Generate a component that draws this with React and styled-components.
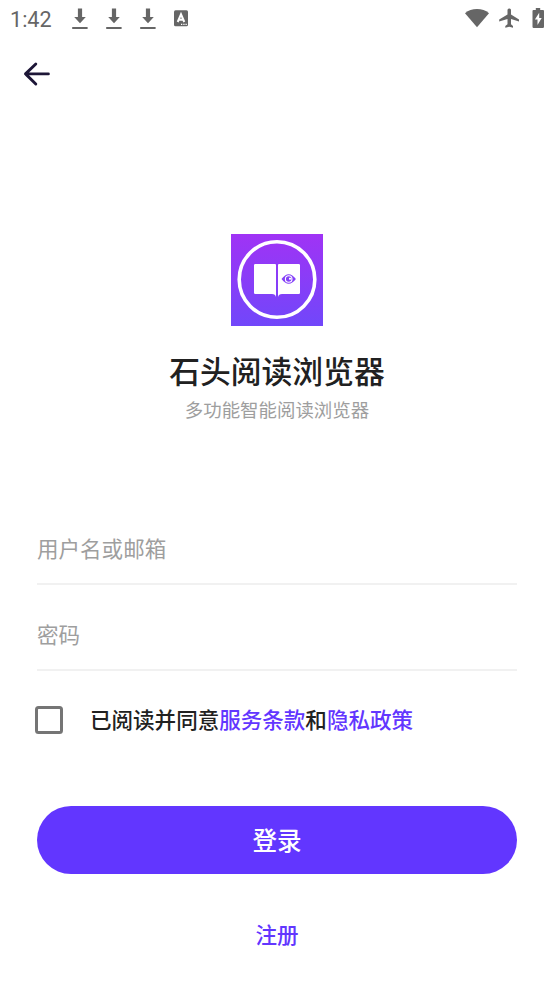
import React from "react";
import styled, { createGlobalStyle } from "styled-components";

const Global = createGlobalStyle`
  * { box-sizing: border-box; }
  html, body { margin: 0; background: #fff; }
  body { font-family: Roboto, "Noto Sans CJK SC", sans-serif; color: #212121; }
  button, input { font: inherit; border: 0; background: none; padding: 0; margin: 0; }
`;

const Screen = styled.main`
  width: 554px;
  height: 984px;
  overflow: hidden;
  background: #fff;
  display: flex;
  flex-direction: column;
`;

const StatusBar = styled.header`
  height: 37px;
  flex: none;
  padding: 0 10px 0 10px;
  display: flex;
  align-items: center;
  justify-content: space-between;
  color: #666;
`;

const StatusGroup = styled.div`
  display: flex;
  align-items: center;
  height: 37px;
`;

const Clock = styled.time`
  width: 62px;
  padding-top: 2px;
  font-size: 21.6px;
  line-height: 26px;
`;

const Glyph = styled.svg`
  display: block;
  flex: none;
  width: ${(p) => p.$w}px;
  height: 37px;
  margin-right: ${(p) => p.$gap || 0}px;
  fill: currentColor;
`;

const NavBar = styled.nav`
  height: 74px;
  flex: none;
  padding-left: 20px;
  display: flex;
  align-items: center;
`;

const BackButton = styled.button`
  width: 34px;
  height: 34px;
  display: block;
  svg { display: block; }
`;

const Brand = styled.section`
  height: 409px;
  flex: none;
  padding-top: 123px;
  display: flex;
  flex-direction: column;
  align-items: center;
`;

const Logo = styled.svg`
  display: block;
  width: 92px;
  height: 92px;
`;

const Title = styled.h1`
  margin: 24px 0 0;
  font-size: 30.77px;
  line-height: 45px;
  font-weight: 500;
  color: #212121;
`;

const Subtitle = styled.p`
  margin: 3px 0 0;
  font-size: 18.46px;
  line-height: 27px;
  font-weight: 400;
  color: #9e9e9e;
`;

const Form = styled.form`
  padding: 0 37px;
  display: flex;
  flex-direction: column;
`;

const Field = styled.input`
  width: 100%;
  height: 65px;
  margin-top: ${(p) => p.$gap || 0}px;
  padding: 0 0 4px;
  border-bottom: 2px solid #f1f1f1;
  border-radius: 0;
  outline: none;
  font-size: 21.54px;
  &::placeholder { color: #9e9e9e; opacity: 1; }
`;

const Agreement = styled.label`
  height: 28px;
  margin: 35px 0 0 -2px;
  display: flex;
  align-items: center;
  font-size: 21.54px;
  line-height: 28px;
  font-weight: 500;
  white-space: nowrap;
`;

const AgreementText = styled.span`
  padding-top: 2px;
`;

const Checkbox = styled.input.attrs({ type: "checkbox" })`
  appearance: none;
  width: 28px;
  height: 28px;
  margin-right: 27px;
  border: 3px solid #757575;
  border-radius: 3.5px;
`;

const Link = styled.span`
  color: #6236ff;
`;

const LoginButton = styled.button`
  height: 68px;
  margin-top: 72px;
  padding-bottom: 3px;
  border-radius: 34px;
  background: #6236ff;
  color: #fff;
  font-size: 24.6px;
  font-weight: 500;
`;

const RegisterButton = styled.button`
  align-self: center;
  margin-top: 46px;
  height: 32px;
  color: #6236ff;
  font-size: 21.54px;
  line-height: 32px;
  font-weight: 500;
`;

const Download = ({ gap }) => (
  <Glyph $w={16} $gap={gap} viewBox="0 0 16 37">
    <path d="M5.900 8.600h4.200v8.300h3.700L8 23.300 2.200 16.900h3.700zM.2 26.900h15.400v2H.2z" />
  </Glyph>
);

const BookLogo = () => (
  <Logo viewBox="0 0 92 92">
    <defs>
      <linearGradient id="brand" x1="0" y1="0" x2="0" y2="1">
        <stop offset="0" stopColor="#a033f5" />
        <stop offset="1" stopColor="#7147fa" />
      </linearGradient>
    </defs>
    <rect width="92" height="92" fill="url(#brand)" />
    <circle cx="46" cy="45.5" r="37.8" fill="none" stroke="#fff" strokeWidth="3.6" />
    <path fill="#fff" d="M24.2 30H44q1 0 1 1v32q-.6-3-4-3H24.2q-1.2 0-1.2-1.2V31.2Q23 30 24.2 30zM48 30h19.800q1.200 0 1.200 1.200v27.600q0 1.200-1.200 1.200H51q-3.400 0-4 3V31q0-1 1-1z" />
    <path fill="#8440f8" d="M50.500 45q7.200-9.600 14.400 0-7.200 9.600-14.400 0z" />
    <circle cx="57.7" cy="45" r="3.3" fill="none" stroke="#fff" strokeWidth="1.1" />
    <path d="M58 43.800h2.300v1.800H58z" fill="#fff" />
  </Logo>
);

export default function App() {
  return (
    <Screen>
      <Global />
      <StatusBar>
        <StatusGroup>
          <Clock>1:42</Clock>
          <Download gap={18} />
          <Download gap={18} />
          <Download gap={18} />
          <Glyph $w={14} viewBox="0 0 14 37">
            <rect y="10.300" width="14" height="16" rx="1.500" />
            <path d="M3.700 22 7 14.300l3.300 7.700M5 19.700h4" fill="none" stroke="#fff" strokeWidth="2" />
            <path d="M7 23.700h1.300v1.200H7zM9.300 23.700h1.300v1.200H9.300zM11.500 23.700h1.300v1.200h-1.300z" fill="#fff" />
          </Glyph>
        </StatusGroup>
        <StatusGroup>
          <Glyph $w={24} $gap={10} viewBox="0 0 24 37">
            <path d="M0 13.200Q5 9.100 12 9.100t12 4.100L12 27.300z" />
          </Glyph>
          <Glyph $w={20} $gap={13} viewBox="0 0 20 37">
            <path d="M20 21.600v-2.100l-8-5V9.900q0-1.500-1.500-1.500H10Q8.500 8.400 8.500 9.900v4.600L.2 19.500v2.100l8.300-2.500v5.200l-2.200 1.800v1.700l3.900-1.100 3.800 1.100v-1.700L12 24.300v-5.200z" />
          </Glyph>
          <Glyph $w={12} viewBox="0 0 12 37">
            <path d="M3.800 8h4.400v2H11q1 0 1 1v15.800q0 1.200-1.200 1.200H1.700Q.5 28 .5 26.800V11q0-1 1-1h2.300z" />
            <path d="M7.200 12.700 2.900 19.600h2.600v5.500L9.700 18H7.200z" fill="#fff" />
          </Glyph>
        </StatusGroup>
      </StatusBar>
      <NavBar>
        <BackButton aria-label="返回">
          <svg width="34" height="34" viewBox="0 0 34 34" fill="none" stroke="#1d1637" strokeWidth="2.900" strokeLinecap="round" strokeLinejoin="round">
            <path d="M28.400 16.900H5.500M15.800 7 5.500 16.900l10.300 10.100" />
          </svg>
        </BackButton>
      </NavBar>
      <Brand>
        <BookLogo />
        <Title>石头阅读浏览器</Title>
        <Subtitle>多功能智能阅读浏览器</Subtitle>
      </Brand>
      <Form onSubmit={(e) => e.preventDefault()}>
        <Field placeholder="用户名或邮箱" />
        <Field $gap={21} type="password" placeholder="密码" />
        <Agreement>
          <Checkbox />
          <AgreementText>已阅读并同意<Link>服务条款</Link>和<Link>隐私政策</Link></AgreementText>
        </Agreement>
        <LoginButton type="submit">登录</LoginButton>
        <RegisterButton type="button">注册</RegisterButton>
      </Form>
    </Screen>
  );
}
